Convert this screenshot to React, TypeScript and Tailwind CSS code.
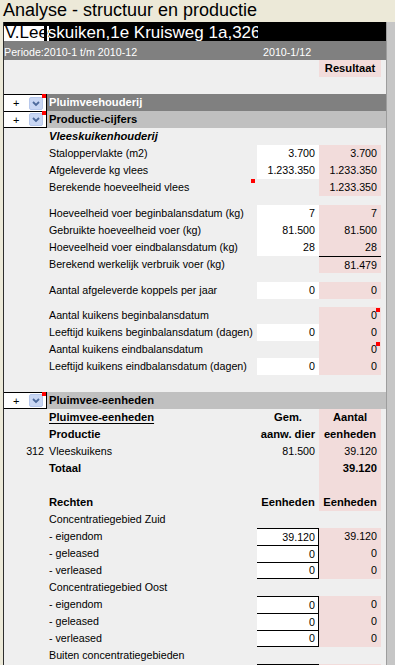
import React from "react";

type RowProps = {
  left?: React.ReactNode;
  label?: React.ReactNode;
  lb?: boolean;
  li?: boolean;
  lu?: boolean;
  input?: React.ReactNode;
  white?: boolean;
  box?: boolean;
  boxEnd?: boolean;
  ih?: boolean;
  result?: React.ReactNode;
  pink?: boolean;
  rb?: boolean;
  rh?: boolean;
  rTop?: boolean;
  labelMark?: boolean;
  resultMark?: boolean;
};

function Row(p: RowProps) {
  let inputCls = "w-[62px] shrink-0 whitespace-nowrap ";
  if (p.ih) inputCls += "text-center font-bold text-[11.2px] leading-[17px]";
  else if (p.box)
    inputCls +=
      "text-right bg-white border-t border-r border-black pr-[3px] " +
      (p.boxEnd ? "border-b leading-[15px]" : "leading-[16px]");
  else if (p.white) inputCls += "text-right bg-white pr-[4px] leading-[17px]";
  else inputCls += "text-right pr-[4px] leading-[17px]";

  let resCls = "relative w-[62px] shrink-0 whitespace-nowrap ";
  if (p.pink) resCls += "bg-[#f2dcdb] ";
  if (p.rh) resCls += "text-center font-bold text-[11.2px] ";
  else resCls += "text-right pr-[4px] ";
  if (p.rb) resCls += "font-bold text-[11.2px] ";
  if (p.rTop) resCls += "border-t border-black leading-[16px]";
  else resCls += "leading-[17px]";

  let labelCls = "relative w-[210px] shrink-0 pl-[2px] whitespace-nowrap leading-[17px] ";
  if (p.lb) labelCls += "font-bold text-[11.2px] ";
  if (p.li) labelCls += "italic ";
  if (p.lu) labelCls += "underline underline-offset-[2px] ";

  return (
    <div className="flex h-[17px] shrink-0">
      <div className="w-[43px] shrink-0 text-right pr-[3px] leading-[17px]">{p.left}</div>
      <div className={labelCls}>
        {p.label}
        {p.labelMark && <span className="absolute right-[2px] top-0 w-[4px] h-[4px] bg-[#ff0000]" />}
      </div>
      <div className={inputCls}>{p.input}</div>
      <div className={resCls}>
        {p.result}
        {p.resultMark && <span className="absolute right-[1px] top-[1px] w-[4px] h-[4px] bg-[#ff0000]" />}
      </div>
      <div className="w-[5px] shrink-0" />
    </div>
  );
}

function Gap({ h }: { h: string }) {
  return <div className={"shrink-0 " + h} />;
}

function DropBtn() {
  return (
    <svg width="14" height="13" viewBox="0 0 14 13" className="block">
      <rect x="0.5" y="0.5" width="13" height="12" rx="1.5" fill="#c9d7f4" stroke="#b7c8ec" />
      <path d="M4 5 L7 8 L10 5" fill="none" stroke="#4d6a9c" strokeWidth="1.8" />
    </svg>
  );
}

function BarRow({ text, dark, last }: { text: string; dark?: boolean; last?: boolean }) {
  return (
    <div className="flex h-[17px] shrink-0">
      <div
        className={
          "relative w-[43px] shrink-0 bg-white border-t border-r border-black flex items-center " +
          (last ? "border-b" : "")
        }
      >
        <span className="ml-[9px] w-[16px] text-[11px] leading-[14px]">+</span>
        <DropBtn />
        <span className="absolute right-0 top-[-1px] w-[4px] h-[4px] bg-[#ff0000]" />
      </div>
      <div
        className={
          "flex-1 pl-[2px] font-bold text-[11.2px] leading-[17px] whitespace-nowrap " +
          (dark ? "bg-[#808080] text-white" : "bg-[#c0c0c0] text-black")
        }
      >
        {text}
      </div>
    </div>
  );
}

const NAME = "V.Leeskuiken,1e Kruisweg 1a,326";

export default function App() {
  return (
    <div className="w-[395px] h-[665px] overflow-hidden bg-[#ece9d8] font-['Liberation_Sans',Arial,sans-serif] text-black text-[10.7px]">
      <div className="h-[22px] pl-[3px] text-[18px] leading-[20px] whitespace-nowrap">
        Analyse - structuur en productie
      </div>
      <div className="flex h-[643px]">
        <div className="ml-[3px] w-[383px] border-l border-[#2e2e2e] bg-[#efefef] flex flex-col overflow-hidden">
          {/* name bar */}
          <div className="relative h-[19px] shrink-0 bg-black -ml-[1px]">
            <div className="absolute left-0 top-0 w-[255px] h-[19px] overflow-hidden">
              <span className="absolute left-[2px] top-[1px] text-[17px] leading-[19px] text-white whitespace-nowrap">
                {NAME}
              </span>
            </div>
            <div className="absolute left-[1px] top-[4px] w-[45px] h-[15px] bg-white overflow-hidden">
              <span className="absolute left-[1px] top-[-3px] text-[17px] leading-[19px] text-black whitespace-nowrap">
                {NAME}
              </span>
            </div>
            <div className="absolute left-[41px] top-[4px] w-[3px] h-[15px] bg-black" />
          </div>
          {/* periode bar */}
          <div className="h-[19px] shrink-0 bg-[#808080] text-white flex pt-[4px] leading-[15px] whitespace-nowrap">
            <span className="w-[259px] shrink-0">Periode:2010-1 t/m 2010-12</span>
            <span>2010-1/12</span>
          </div>

          <Row result="Resultaat" pink rh />
          <Row />
          <BarRow text="Pluimveehouderij" dark />
          <BarRow text="Productie-cijfers" last />
          <Row label="Vleeskuikenhouderij" lb li />
          <Row label="Staloppervlakte  (m2)" input="3.700" white result="3.700" pink />
          <Row label="Afgeleverde kg vlees" input="1.233.350" white result="1.233.350" pink />
          <Row label="Berekende hoeveelheid vlees" labelMark result="1.233.350" pink />
          <Gap h="h-[9px]" />
          <Row label="Hoeveelheid voer beginbalansdatum (kg)" input="7" white result="7" pink />
          <Row label="Gebruikte hoeveelheid voer (kg)" input="81.500" white result="81.500" pink />
          <Row label="Hoeveelheid voer eindbalansdatum (kg)" input="28" white result="28" pink />
          <Row label="Berekend werkelijk verbruik voer (kg)" result="81.479" pink rTop />
          <Gap h="h-[9px]" />
          <Row label="Aantal afgeleverde koppels per jaar" input="0" white result="0" pink />
          <Gap h="h-[8px]" />
          <Row label="Aantal kuikens beginbalansdatum" result="0" pink resultMark />
          <Row label="Leeftijd kuikens beginbalansdatum (dagen)" input="0" white result="0" pink />
          <Row label="Aantal kuikens eindbalansdatum" result="0" pink resultMark />
          <Row label="Leeftijd kuikens eindbalansdatum (dagen)" input="0" white result="0" pink />
          <Row />
          <BarRow text="Pluimvee-eenheden" last />
          <Row label="Pluimvee-eenheden" lb lu input="Gem." ih result="Aantal" pink rh />
          <Row label="Productie" lb input="aanw. dier" ih result="eenheden" pink rh />
          <Row left="312" label="Vleeskuikens" input="81.500" result="39.120" pink />
          <Row label="Totaal" lb result="39.120" pink rb />
          <Row pink />
          <Row label="Rechten" lb input="Eenheden" ih result="Eenheden" pink rh />
          <Row label="Concentratiegebied Zuid" />
          <Row label="- eigendom" input="39.120" box result="39.120" pink />
          <Row label="- geleased" input="0" box result="0" pink />
          <Row label="- verleased" input="0" box boxEnd result="0" pink />
          <Row label="Concentratiegebied Oost" />
          <Row label="- eigendom" input="0" box result="0" pink />
          <Row label="- geleased" input="0" box result="0" pink />
          <Row label="- verleased" input="0" box boxEnd result="0" pink />
          <Row label="Buiten concentratiegebieden" />
          <Row label="- eigendom" input="0" box result="0" pink />
        </div>
        <div className="w-[9px] bg-[#c6c6c6] border-l border-[#9d9d9d]" />
      </div>
    </div>
  );
}
